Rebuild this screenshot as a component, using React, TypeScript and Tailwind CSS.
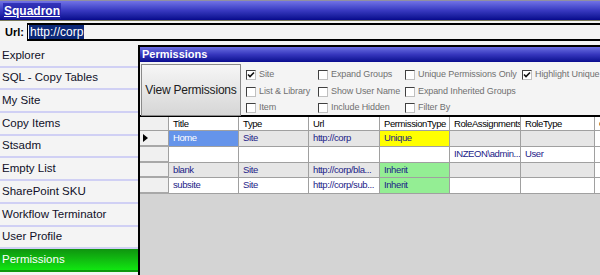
import React from 'react';

const menu = [
  'Explorer',
  'SQL - Copy Tables',
  'My Site',
  'Copy Items',
  'Stsadm',
  'Empty List',
  'SharePoint SKU',
  'Workflow Terminator',
  'User Profile',
  'Permissions',
];

const optionCols = [
  { x: 'w-[72px]', items: [{ label: 'Site', on: true }, { label: 'List & Library' }, { label: 'Item' }] },
  { x: 'w-[87px]', items: [{ label: 'Expand Groups' }, { label: 'Show User Name' }, { label: 'Include Hidden' }] },
  { x: 'w-[117px]', items: [{ label: 'Unique Permissions Only' }, { label: 'Expand Inherited Groups' }, { label: 'Filter By' }] },
  { x: 'w-[90px]', items: [{ label: 'Highlight Unique', on: true }] },
];

const cols = [
  { name: 'Title', w: 'w-[70px]' },
  { name: 'Type', w: 'w-[70px]' },
  { name: 'Url', w: 'w-[71px]' },
  { name: 'PermissionType', w: 'w-[70px]' },
  { name: 'RoleAssignments', w: 'w-[71px]' },
  { name: 'RoleType', w: 'w-[74px]' },
  { name: 'Compare', w: 'w-[40px]' },
];

type Row = { cells: string[]; shade: boolean; current?: boolean };

const rows: Row[] = [
  { cells: ['Home', 'Site', 'http://corp', 'Unique', '', '', ''], shade: true, current: true },
  { cells: ['', '', '', '', 'INZEON\\admin...', 'User', ''], shade: false },
  { cells: ['blank', 'Site', 'http://corp/bla...', 'Inherit', '', '', ''], shade: true },
  { cells: ['subsite', 'Site', 'http://corp/sub...', 'Inherit', '', '', ''], shade: false },
];

const Check: React.FC<{ on?: boolean }> = ({ on }) => (
  <span className="relative w-[10px] h-[10px] shrink-0 bg-white border border-t-[#404040] border-l-[#404040] border-b-[#c0c0c0] border-r-[#c0c0c0]">
    {on && (
      <svg viewBox="0 0 8 8" className="absolute inset-0 w-[8px] h-[8px]">
        <path d="M1 3.5 L3 5.5 L7 1.5" fill="none" stroke="#111" strokeWidth="1.6" />
      </svg>
    )}
  </span>
);

function cellBg(row: Row, i: number) {
  if (row.current && i === 0) return 'bg-[#6594ea] text-white';
  if (i === 3 && row.cells[3] === 'Unique') return 'bg-[#ffff00]';
  if (i === 3 && row.cells[3] === 'Inherit') return 'bg-[#94ee94]';
  if (i === 6) return 'bg-white';
  if (row.shade && i < 6) return 'bg-[#e6e6e6]';
  return 'bg-white';
}

export default function App() {
  return (
    <div className="w-[600px] h-[275px] overflow-hidden flex flex-col bg-[#f4f4f4] font-['Liberation_Sans',Arial,sans-serif]">
      {/* title bar */}
      <div className="h-[21px] shrink-0 border-t border-t-[#9090a0] border-b border-b-[#7a7a5a] bg-gradient-to-b from-[#7272e6] via-[#3838c0] to-[#08088c] flex items-center pl-[3px]">
        <span className="bg-[#2020a8]/70 px-[1px] text-white font-bold text-[12px] underline leading-[16px]">Squadron</span>
      </div>

      {/* url row */}
      <div className="h-[22px] shrink-0 flex items-center">
        <span className="w-[27px] pl-[5px] text-[11px] font-bold text-black">Url:</span>
        <div className="flex-1 h-[18px] border-t-2 border-b-2 border-black border-l border-l-black flex items-center pl-[1px]">
          <span className="bg-[#0c2878] text-white text-[12px] leading-[14px] px-[1px]">http://corp</span>
        </div>
      </div>

      <div className="flex-1 flex min-h-0 pt-[2px]">
        {/* left menu */}
        <div className="w-[138px] shrink-0 flex flex-col">
          {menu.map((m) => {
            const active = m === 'Permissions';
            return (
              <div
                key={m}
                className={`h-[22.7px] shrink-0 flex items-center pl-[2px] text-[11.5px] border-b-2 ${
                  active
                    ? 'bg-gradient-to-b from-[#0f940f] to-[#10e610] text-white border-b-transparent'
                    : 'text-[#101028] border-b-[#d0d0f4]'
                }`}
              >
                {m}
              </div>
            );
          })}
        </div>

        {/* right panel */}
        <div className="flex-1 flex flex-col border-l-2 border-l-black border-t-2 border-t-black bg-[#d4d4d4] min-w-0">
          <div className="h-[15px] shrink-0 bg-gradient-to-b from-[#6d6de2] via-[#3636bd] to-[#0a0a8e] text-white font-bold text-[11px] leading-[15px] pl-[2px]">
            Permissions
          </div>

          <div className="h-[55px] shrink-0 bg-[#f4f4f4] flex items-start pt-[2px] pl-[1px] border-b-2 border-b-black">
            <button className="w-[100px] h-[52px] shrink-0 bg-gradient-to-b from-[#f6f6f6] to-[#d6d6d6] border border-[#8a8a8a] text-[12px] text-[#202020] whitespace-nowrap tracking-[-0.2px]">
              View Permissions
            </button>
            <div className="flex pl-[5px] pt-[5px]">
              {optionCols.map((c, ci) => (
                <div key={ci} className={`${c.x} flex flex-col gap-[4.5px]`}>
                  {c.items.map((it) => (
                    <div key={it.label} className="flex items-center gap-[3px] h-[12px]">
                      <Check on={it.on} />
                      <span className="text-[9px] text-[#707070] whitespace-nowrap tracking-[-0.1px]">{it.label}</span>
                    </div>
                  ))}
                </div>
              ))}
            </div>
          </div>

          {/* grid */}
          <div className="flex flex-col text-[9.5px] tracking-[-0.4px] whitespace-nowrap">
            <div className="flex h-[14px] bg-white border-b border-b-[#a0a0a0]">
              <div className="w-[29px] shrink-0 bg-[#f0f0f0] border-r border-r-[#a0a0a0]" />
              {cols.map((c) => (
                <div key={c.name} className={`${c.w} shrink-0 border-r border-r-[#a0a0a0] pl-[4px] leading-[13px] text-black overflow-hidden`}>
                  {c.name}
                </div>
              ))}
            </div>
            {rows.map((r, ri) => (
              <div key={ri} className="flex h-[15.8px]">
                <div className="w-[29px] shrink-0 bg-[#f0f0f0] border-r border-r-[#a0a0a0] border-b-2 border-b-[#a8a8a8] flex items-center pl-[3px]">
                  {r.current && (
                    <svg viewBox="0 0 5 8" className="w-[5px] h-[8px]">
                      <path d="M0 0 L5 4 L0 8 Z" fill="#000" />
                    </svg>
                  )}
                </div>
                {cols.map((c, i) => (
                  <div
                    key={c.name}
                    className={`${c.w} shrink-0 border-r border-r-[#a0a0a0] border-b border-b-[#a0a0a0] pl-[4px] leading-[14px] overflow-hidden text-[#1c1c88] ${cellBg(r, i)}`}
                  >
                    {r.cells[i]}
                  </div>
                ))}
              </div>
            ))}
          </div>
        </div>
      </div>
    </div>
  );
}
